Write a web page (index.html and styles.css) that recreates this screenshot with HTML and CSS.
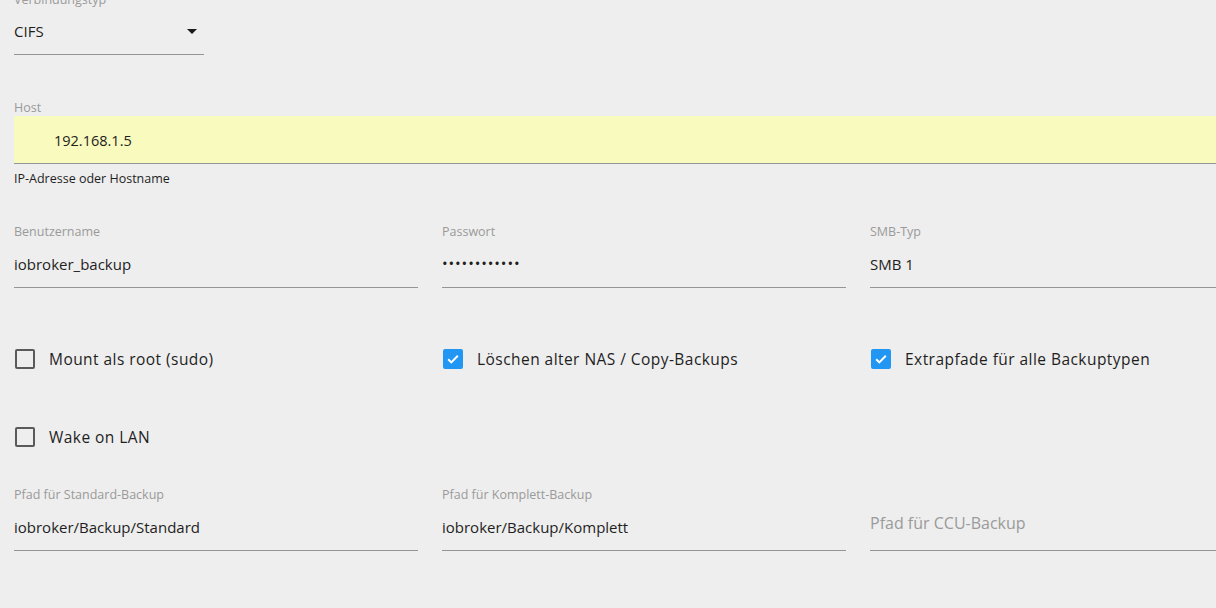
FILE: index.html
```html
<!DOCTYPE html>
<html lang="de">
<head>
<meta charset="utf-8">
<title>Backup NAS</title>
<link rel="stylesheet" href="styles.css">
</head>
<body>
<div class="page">
  <div class="field select-field">
    <div class="label">Verbindungstyp</div>
    <div class="value select-value">
      <span>CIFS</span>
      <svg class="arrow" width="10" height="5" viewBox="0 0 10 5"><path d="M0 0h10L5 5z" fill="#1a1a1a"/></svg>
    </div>
  </div>

  <div class="field host-field">
    <div class="label">Host</div>
    <div class="value host-value">192.168.1.5</div>
    <div class="helper">IP-Adresse oder Hostname</div>
  </div>

  <div class="grid row-fields">
    <div class="field">
      <div class="label">Benutzername</div>
      <div class="value">iobroker_backup</div>
    </div>
    <div class="field">
      <div class="label">Passwort</div>
      <div class="value dots">••••••••••••</div>
    </div>
    <div class="field">
      <div class="label">SMB-Typ</div>
      <div class="value">SMB 1</div>
    </div>
  </div>

  <div class="grid row-checks">
    <label class="check"><span class="box"></span><span class="check-text">Mount als root (sudo)</span></label>
    <label class="check"><span class="box checked"><svg width="18" height="18" viewBox="0 0 18 18"><path d="M4.2 9.3l3.1 3.1 6.5-6.6" fill="none" stroke="#fff" stroke-width="2"/></svg></span><span class="check-text">Löschen alter NAS / Copy-Backups</span></label>
    <label class="check"><span class="box checked"><svg width="18" height="18" viewBox="0 0 18 18"><path d="M4.2 9.3l3.1 3.1 6.5-6.6" fill="none" stroke="#fff" stroke-width="2"/></svg></span><span class="check-text">Extrapfade für alle Backuptypen</span></label>
  </div>

  <div class="grid row-wake">
    <label class="check"><span class="box"></span><span class="check-text">Wake on LAN</span></label>
  </div>

  <div class="grid row-paths">
    <div class="field">
      <div class="label">Pfad für Standard-Backup</div>
      <div class="value">iobroker/Backup/Standard</div>
    </div>
    <div class="field">
      <div class="label">Pfad für Komplett-Backup</div>
      <div class="value">iobroker/Backup/Komplett</div>
    </div>
    <div class="field">
      <div class="label empty"></div>
      <div class="value placeholder">Pfad für CCU-Backup</div>
    </div>
  </div>
</div>
</body>
</html>
```
FILE: styles.css
```css
html, body {
  margin: 0;
  padding: 0;
  background: #eeeeee;
  overflow: hidden;
}
body {
  font-family: "Open Sans", "Noto Sans", sans-serif;
  color: #1e1e1e;
}
.page {
  margin-top: -8px;
  padding-left: 14px;
  width: 1260px;
}
.label {
  font-size: 12.5px;
  line-height: 16px;
  height: 16px;
  color: #9a9a9a;
  white-space: nowrap;
}
.value {
  font-size: 15px;
  line-height: 46px;
  height: 46px;
  border-bottom: 1px solid #959595;
  white-space: nowrap;
}
.select-field {
  width: 190px;
}
.select-value {
  display: flex;
  align-items: center;
  justify-content: space-between;
  padding-right: 7px;
  line-height: 44px;
}
.arrow {
  display: block;
}
.host-field {
  margin-top: 45px;
}
.host-value {
  background: #f9fabd;
  padding-left: 40px;
  height: 47px;
  line-height: 49px;
  font-size: 14.5px;
}
.helper {
  margin-top: 7px;
  font-size: 12.5px;
  line-height: 16px;
  color: #1e1e1e;
}
.grid {
  display: grid;
  grid-template-columns: 404px 404px 404px;
  column-gap: 24px;
}
.row-fields {
  margin-top: 37px;
}
.row-fields .value, .row-paths .value {
  height: 47px;
  line-height: 48px;
}
.row-fields .value.dots {
  font-size: 15px;
  letter-spacing: 0.9px;
  line-height: 46px;
}
.check {
  display: flex;
  align-items: center;
  height: 48px;
}
.row-checks {
  margin-top: 47px;
}
.row-wake {
  margin-top: 30px;
}
.box {
  width: 16px;
  height: 16px;
  border: 2px solid #5a5a5a;
  border-radius: 2px;
  flex: none;
  margin-left: 1px;
  box-sizing: content-box;
  display: flex;
  align-items: center;
  justify-content: center;
}
.box.checked {
  background: #2196f3;
  border-color: #2196f3;
}
.box svg {
  display: block;
  flex: none;
}
.check-text {
  margin-left: 14px;
  font-size: 15.5px;
  letter-spacing: 0.45px;
  color: #1e1e1e;
}
.row-paths {
  margin-top: 26px;
}
.row-paths .value.placeholder {
  color: #9a9a9a;
  font-size: 16px;
  line-height: 40px;
}
```
